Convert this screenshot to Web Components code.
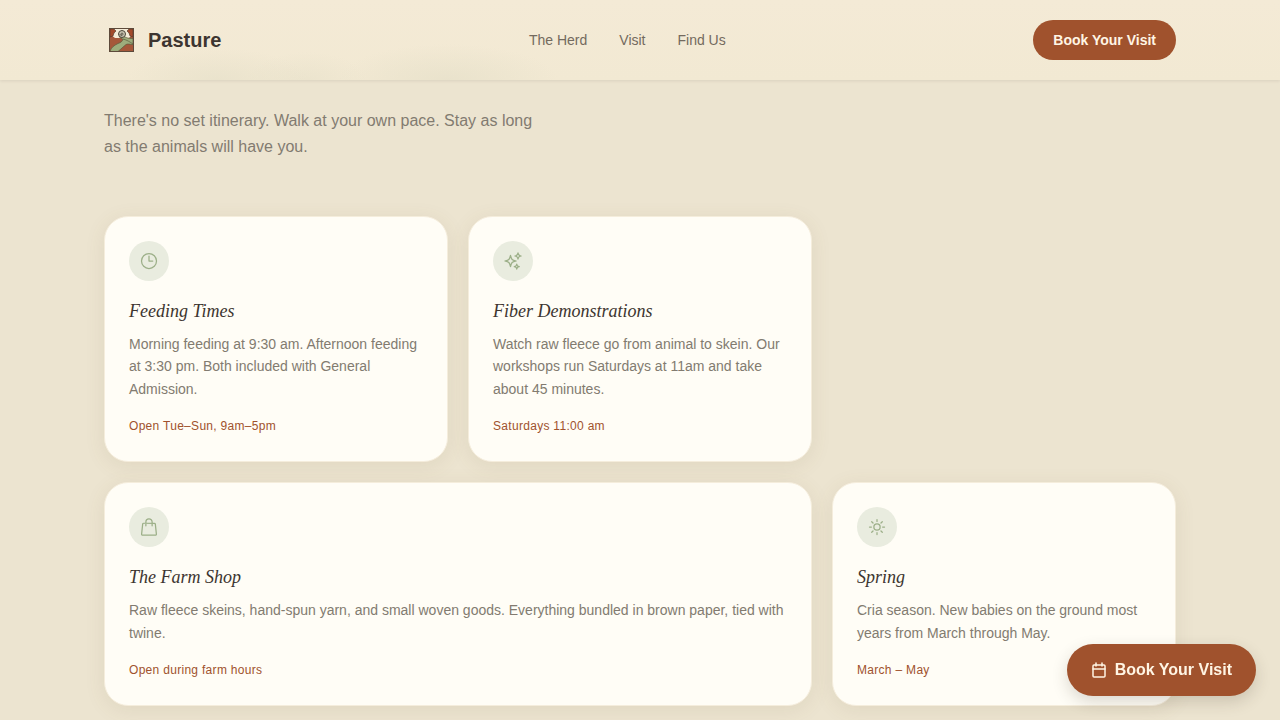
<!DOCTYPE html>
<html lang="en">
<head>
<meta charset="utf-8">
<meta name="viewport" content="width=device-width, initial-scale=1">
<title>Pasture</title>
<style>
  :root {
    --cream: #f4ead5;
    --sand: #ece4d0;
    --paper: #fffdf6;
    --ink: #3d3530;
    --muted: #827b70;
    --rust: #a0522d;
    --sage: #9caf88;
    --serif: "Liberation Serif", serif;
  }
  body {
    margin: 0;
    min-height: 100vh;
    background: var(--sand);
    color: var(--ink);
    font-family: "Liberation Sans", sans-serif;
  }
</style>
</head>
<body>
<site-header>
  <a href="#herd">The Herd</a>
  <a href="#visit">Visit</a>
  <a href="#find">Find Us</a>
</site-header>

<visit-section>
  <span slot="intro">There's no set itinerary. Walk at your own pace. Stay as long as the animals will have you.</span>
  <visit-card icon="clock">
    <span slot="title">Feeding Times</span>
    Morning feeding at 9:30 am. Afternoon feeding at 3:30 pm. Both included with General Admission.
    <span slot="meta">Open Tue–Sun, 9am–5pm</span>
  </visit-card>
  <visit-card icon="sparkles">
    <span slot="title">Fiber Demonstrations</span>
    Watch raw fleece go from animal to skein. Our workshops run Saturdays at 11am and take about 45 minutes.
    <span slot="meta">Saturdays 11:00 am</span>
  </visit-card>
  <visit-card icon="bag" wide>
    <span slot="title">The Farm Shop</span>
    Raw fleece skeins, hand-spun yarn, and small woven goods. Everything bundled in brown paper, tied with twine.
    <span slot="meta">Open during farm hours</span>
  </visit-card>
  <visit-card icon="sun">
    <span slot="title">Spring</span>
    Cria season. New babies on the ground most years from March through May.
    <span slot="meta">March – May</span>
  </visit-card>
</visit-section>

<book-button floating>Book Your Visit</book-button>

<script>
// Line icons, all on a 24 unit grid
const ICONS = {
  clock: `<circle cx="12" cy="12" r="9"/><path d="M12 6v6h4.5"/>`,
  sparkles: `<path d="M9.8 15.9 9 18.75l-.8-2.85a4.5 4.5 0 0 0-3.1-3.1L2.25 12l2.85-.8a4.5 4.5 0 0 0 3.1-3.1L9 5.25l.8 2.85a4.5 4.5 0 0 0 3.1 3.1l2.85.8-2.85.8a4.5 4.5 0 0 0-3.1 3.1Z"/>
    <path d="M18.26 8.72 18 9.75l-.26-1.03a3.4 3.4 0 0 0-2.46-2.46L14.25 6l1.03-.26a3.4 3.4 0 0 0 2.46-2.46L18 2.25l.26 1.03a3.4 3.4 0 0 0 2.46 2.46l1.03.26-1.03.26a3.4 3.4 0 0 0-2.46 2.46Z"/>
    <path d="m16.9 20.57-.4 1.18-.4-1.18a2.3 2.3 0 0 0-1.42-1.42l-1.18-.4 1.18-.4a2.3 2.3 0 0 0 1.42-1.42l.4-1.18.4 1.18a2.3 2.3 0 0 0 1.42 1.42l1.18.4-1.18.4a2.3 2.3 0 0 0-1.42 1.42Z"/>`,
  bag: `<path d="M15.75 10.5V6a3.75 3.75 0 1 0-7.5 0v4.5M19.6 8.5l1.27 12c.07.67-.45 1.25-1.12 1.25H4.25a1.13 1.13 0 0 1-1.12-1.25l1.27-12A1.13 1.13 0 0 1 5.52 7.5h12.96c.57 0 1.06.43 1.12 1Z"/>`,
  sun: `<path d="M12 3v2.25M18.36 5.64l-1.59 1.59M21 12h-2.25M18.36 18.36l-1.59-1.59M12 18.75V21M7.23 16.77l-1.59 1.59M5.25 12H3M7.23 7.23 5.64 5.64"/><circle cx="12" cy="12" r="3.75"/>`,
};

class SiteHeader extends HTMLElement {
  constructor() {
    super();
    this.attachShadow({ mode: "open" });
  }

  connectedCallback() {
    this.shadowRoot.innerHTML = `
      <style>
        :host {
          display: block;
          position: sticky;
          top: 0;
          z-index: 2;
          background: var(--cream);
          box-shadow: 0 1px 3px rgba(61, 48, 41, 0.1);
        }

        /* Soft tint along the lower edge of the bar */
        .tint {
          background:
            radial-gradient(ellipse 90px 32px at 17% 100%, rgba(226, 221, 198, 0.5), transparent),
            radial-gradient(ellipse 110px 36px at 35% 100%, rgba(226, 221, 198, 0.55), transparent),
            radial-gradient(ellipse 60px 28px at 24% 100%, rgba(226, 221, 198, 0.4), transparent),
            linear-gradient(#f4ead6, #f2e9d3);
        }

        .bar {
          box-sizing: border-box;
          max-width: 1120px;
          min-height: 80px;
          margin: 0 auto;
          padding: 0 24px;
          display: flex;
          align-items: center;
          justify-content: space-between;
        }

        .brand {
          display: flex;
          align-items: center;
          gap: 8px;
          color: var(--ink);
          font-size: 20px;
          font-weight: bold;
          text-decoration: none;
        }

        nav {
          display: flex;
          gap: 32px;
        }

        ::slotted(a) {
          color: #736a5e;
          font-size: 14px;
          text-decoration: none;
        }
      </style>

      <div class="tint">
        <div class="bar">
          <a class="brand" href="#top">
            <!-- Framed pasture: curled horns over a winding path -->
            <svg width="36" height="36" viewBox="0 0 36 36" aria-hidden="true">
              <rect x="5.5" y="6.500" width="24" height="23" fill="#a5573a"/>
              <path d="M7 7h21v6l-3 3H11l-4-3z" fill="#f5ecd8"/>
              <path d="M6 7h4l2 2-2 2-1 3-3 1zM29 7h-4l-2 2 2 2 1 3 3 1z" fill="#a34a2b" stroke="#4a382c" stroke-width=".6"/>
              <path d="M6 29.500c1-4 4-6 8-8 3-1 4-2 5-4l-4-3h5c2 1 4 2 9 2v6c-3 0-5-1-7 0-3 2-5 5-8 7z" fill="#9dac7c" stroke="#5b5a3d" stroke-width=".7"/>
              <path d="M19 17c4 1 7 3 10 5" fill="none" stroke="#5b5a3d" stroke-width=".7"/>
              <circle cx="18" cy="12" r="3.5" fill="#c9c4b2" stroke="#4a4438"/>
              <path d="M18 13a1 1 0 1 1 1-1c0 2-3 2-3 0" fill="none" stroke="#4a4438" stroke-width=".8"/>
              <rect x="5.5" y="6.5" width="24" height="23" fill="none" stroke="#5d4a3b"/>
            </svg>
            Pasture
          </a>
          <nav><slot></slot></nav>
          <book-button>Book Your Visit</book-button>
        </div>
      </div>
    `;
  }
}

class VisitSection extends HTMLElement {
  constructor() {
    super();
    this.attachShadow({ mode: "open" });
  }

  connectedCallback() {
    this.shadowRoot.innerHTML = `
      <style>
        :host {
          display: block;
          box-sizing: border-box;
          max-width: 1120px;
          margin: 0 auto;
          padding: 28px 24px 14px;
        }

        .intro {
          max-width: 448px;
          margin: 0 0 56px;
          color: var(--muted);
          font-size: 16px;
          line-height: 26px;
        }

        .grid {
          display: grid;
          grid-template-columns: repeat(3, 1fr);
          gap: 20px;
        }

        ::slotted([wide]) {
          grid-column: 1 / span 2;
        }
      </style>

      <p class="intro"><slot name="intro"></slot></p>
      <div class="grid"><slot></slot></div>
    `;
  }
}

class VisitCard extends HTMLElement {
  constructor() {
    super();
    this.attachShadow({ mode: "open" });
  }

  connectedCallback() {
    this.shadowRoot.innerHTML = `
      <style>
        :host {
          display: block;
          padding: 24px;
          border: 1px solid #f5eddc;
          border-radius: 24px;
          background: var(--paper);
          box-shadow: 0 4px 20px rgba(120, 95, 60, 0.1);
        }

        .icon {
          display: flex;
          align-items: center;
          justify-content: center;
          width: 40px;
          height: 40px;
          border-radius: 50%;
          background: #e9ecdf;
        }

        svg {
          fill: none;
          stroke: var(--sage);
          stroke-width: 1.5;
          stroke-linecap: round;
          stroke-linejoin: round;
        }

        h3 {
          margin: 16px 0 8px;
          font: italic 18px/28px var(--serif);
        }

        p {
          margin: 0;
          color: var(--muted);
          font-size: 14px;
          line-height: 1.6;
        }

        .meta {
          margin-top: 16px;
          color: var(--rust);
          font-size: 12px;
          line-height: 21px;
          letter-spacing: 0.025em;
        }
      </style>

      <div class="icon">
        <svg width="20" height="20" viewBox="0 0 24 24" aria-hidden="true">${ICONS[this.getAttribute("icon")]}</svg>
      </div>
      <h3><slot name="title"></slot></h3>
      <p><slot></slot></p>
      <p class="meta"><slot name="meta"></slot></p>
    `;
  }
}

class BookButton extends HTMLElement {
  constructor() {
    super();
    this.attachShadow({ mode: "open" });
  }

  connectedCallback() {
    const icon = this.hasAttribute("floating")
      ? `<svg width="16" height="16" viewBox="0 0 16 16" aria-hidden="true"><rect x="2" y="3" width="12" height="12" rx="1"/><path d="M2 7h12M5 1v3M11 1v3"/></svg>`
      : "";

    this.shadowRoot.innerHTML = `
      <style>
        :host {
          display: block;
        }

        button {
          display: flex;
          align-items: center;
          gap: 8px;
          height: 40px;
          padding: 0 20px;
          border: 0;
          border-radius: 26px;
          background: var(--rust);
          color: #fff5e4;
          font: bold 14px "Liberation Sans", sans-serif;
          cursor: pointer;
        }

        svg {
          fill: none;
          stroke: currentColor;
          stroke-width: 1.5;
          stroke-linecap: round;
        }

        /* Stays in the corner over the page */
        :host([floating]) {
          position: fixed;
          right: 24px;
          bottom: 24px;
          z-index: 3;
        }

        :host([floating]) button {
          height: 52px;
          padding: 0 24px;
          font-size: 16px;
          box-shadow: 0 6px 16px rgba(61, 48, 41, 0.18);
        }
      </style>

      <button type="button">${icon}<slot></slot></button>
    `;
  }
}

customElements.define("site-header", SiteHeader);
customElements.define("visit-section", VisitSection);
customElements.define("visit-card", VisitCard);
customElements.define("book-button", BookButton);
</script>
</body>
</html>
